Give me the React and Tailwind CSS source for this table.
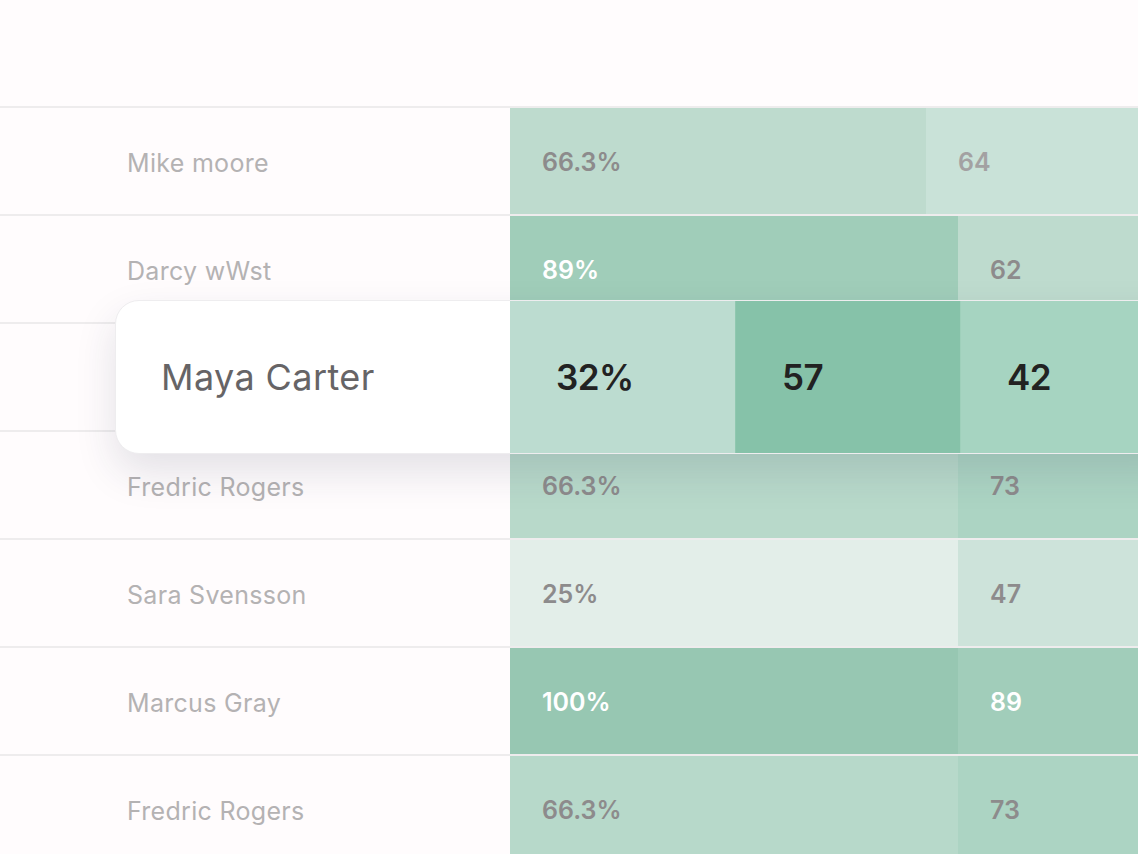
import React from "react";

const rows = [
  { name: "Mike moore", v1: "66.3%", w1: 416, c1: "bg-[#bedbce]", t1: "text-[#8d8b8c]", v2: "64", c2: "bg-[#c9e2d8]", t2: "text-[#a3a1a2]" },
  { name: "Darcy wWst", v1: "89%", w1: 448, c1: "bg-[#a0cdb9]", t1: "text-white", v2: "62", c2: "bg-[#bedbce]", t2: "text-[#8d8b8c]" },
  { name: "Maya Carter", v1: "32%", w1: 448, c1: "bg-[#bcdcd0]", t1: "text-[#8d8b8c]", v2: "57", c2: "bg-[#a6d4c1]", t2: "text-[#8d8b8c]" },
  { name: "Fredric Rogers", v1: "66.3%", w1: 448, c1: "bg-[#b8d9ca]", t1: "text-[#8d8b8c]", v2: "73", c2: "bg-[#acd4c3]", t2: "text-[#8d8b8c]" },
  { name: "Sara Svensson", v1: "25%", w1: 448, c1: "bg-[#e3eee9]", t1: "text-[#8d8b8c]", v2: "47", c2: "bg-[#cde3da]", t2: "text-[#8d8b8c]" },
  { name: "Marcus Gray", v1: "100%", w1: 448, c1: "bg-[#97c7b2]", t1: "text-white", v2: "89", c2: "bg-[#a1cdba]", t2: "text-white" },
  { name: "Fredric Rogers", v1: "66.3%", w1: 448, c1: "bg-[#b7d9ca]", t1: "text-[#8d8b8c]", v2: "73", c2: "bg-[#acd4c3]", t2: "text-[#8d8b8c]" },
];

export default function App() {
  return (
    <div
      className="relative w-[1138px] h-[854px] overflow-hidden bg-[#fffcfd]"
      style={{ fontFamily: "Inter, 'Noto Sans', sans-serif" }}
    >
      <div className="h-[106px]" />
      {rows.map((r, i) => (
        <div key={i} className="flex h-[108px] border-t-2 border-[#eeeced]">
          <div className="w-[510px] shrink-0 flex items-center pl-[127px] pt-[5px] text-[25px] text-[#b4b2b3] tracking-[0.3px]">
            {r.name}
          </div>
          <div
            className={`${r.c1} shrink-0 flex items-center pl-[32px] pt-[4px] text-[25px] font-semibold ${r.t1}`}
            style={{ width: r.w1 }}
          >
            {r.v1}
          </div>
          <div className={`${r.c2} flex-1 flex items-center pl-[32px] pt-[4px] text-[25px] font-semibold ${r.t2}`}>
            {r.v2}
          </div>
        </div>
      ))}

      <div className="absolute left-[115px] top-[300px] right-[-40px] h-[154px] flex rounded-l-[24px] border border-[#eeedef] bg-white shadow-[0_18px_40px_rgba(40,50,80,0.13)] overflow-hidden">
        <div className="w-[394px] shrink-0 flex items-center pl-[45px] text-[36px] text-[#666466] tracking-[0.4px]">
          Maya Carter
        </div>
        <div className="w-[225px] shrink-0 flex items-center pl-[46px] bg-[#bcdcd0] text-[35px] font-semibold tracking-[-0.5px] text-[#222222]">
          32%
        </div>
        <div className="w-[225px] shrink-0 flex items-center pl-[46px] bg-[#86c2a9] border-l border-[#90c8b0] text-[35px] font-semibold tracking-[-0.5px] text-[#222222]">
          57
        </div>
        <div className="flex-1 flex items-center pl-[46px] bg-[#a6d4c1] border-l border-[#9fd0bb] text-[35px] font-semibold tracking-[-0.5px] text-[#222222]">
          42
        </div>
      </div>
    </div>
  );
}
